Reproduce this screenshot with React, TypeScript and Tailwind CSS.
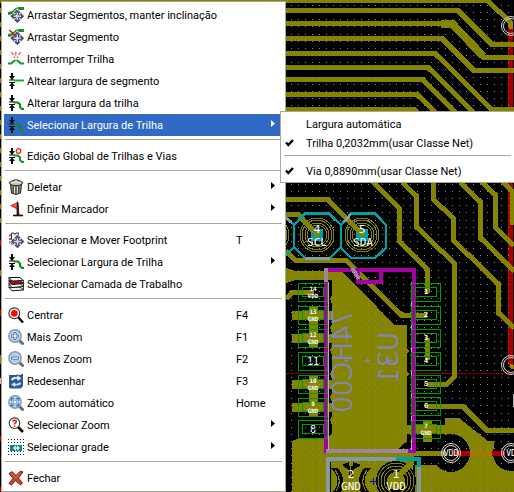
import type { ReactNode } from "react";

/* ---------- menu icons (16 x 16) ---------- */

function Icon({ children }: { children: ReactNode }) {
  return (
    <svg aria-hidden="true" width="16" height="16" viewBox="0 0 16 16" fill="none" className="shrink-0">
      {children}
    </svg>
  );
}

const MoveArrows = ({ x = 10, y = 10 }: { x?: number; y?: number }) => (
  <g transform={`translate(${x} ${y})`}>
    <path
      d="M0-6.4 2.6-3.6H1.2V-1.2H3.6V-2.6L6.4 0 3.6 2.6V1.2H1.2V3.6H2.6L0 6.4-2.6 3.6H-1.2V1.2H-3.6V2.6L-6.4 0-3.6-2.6V-1.2H-1.2V-3.6H-2.6Z"
      fill="#eef0fa"
      stroke="#f4f4fa"
      strokeWidth="2"
    />
    <path
      d="M0-6.4 2.6-3.6H1.2V-1.2H3.6V-2.6L6.4 0 3.6 2.6V1.2H1.2V3.6H2.6L0 6.4-2.6 3.6H-1.2V1.2H-3.6V2.6L-6.4 0-3.6-2.6V-1.2H-1.2V-3.6H-2.6Z"
      fill="#dcdeee"
      stroke="#2e2e58"
      strokeWidth="0.9"
    />
    <path d="M0-5.8 1.8-3.8H-1.8ZM0 5.8 1.8 3.8H-1.8ZM-5.8 0-3.8-1.8V1.8ZM5.8 0 3.8-1.8V1.8Z" fill="#2e2e58" />
  </g>
);

const DragSlope = () => (
  <Icon>
    <path d="M0 6.5 5 5.5 8 2.5 11 1.5H16" stroke="#149226" strokeWidth="3" />
    <MoveArrows x={9.3} y={9.2} />
  </Icon>
);

const DragSegment = () => (
  <Icon>
    <path d="M0 6.5 5 5.5 8 2.5 11 1.5H16" stroke="#149226" strokeWidth="3" />
    <MoveArrows x={9.3} y={9.2} />
    <path d="M1.5 1 8 7.5" stroke="#d01818" strokeWidth="1.6" />
  </Icon>
);

const BreakTrack = () => (
  <Icon>
    <path d="M0 12.5H3L6.5 9.5M16 12.5H13L9.5 9.5" stroke="#189a2c" strokeWidth="2.2" />
    <path d="M6 9.5H10" stroke="#189a2c" strokeWidth="1.2" />
    <path d="M3.500 1 5.500 4M7.800 1V4.500M12.500 1 10.500 4M6 5.500 7 7M10 5.500 9 7" stroke="#d85050" strokeWidth="1.3" />
  </Icon>
);

const WidthArrows = () => (
  <path
    d="M3 0H5V3H7L4.5 6.500H7V7.600H1V6.500H3.500L1 3H3ZM1 9H7V10.100H4.600L7 13H5V16H3V13H1L3.400 10.100H1Z"
    fill="#101010"
  />
);

const SegmentWidth = () => (
  <Icon>
    <WidthArrows />
    <path d="M6 7.5H16" stroke="#10b81c" strokeWidth="2" />
  </Icon>
);

const TrackWidth = () => (
  <Icon>
    <WidthArrows />
    <path d="M5.5 7.5H10L12 9.5V12L14 14H16" stroke="#0c8e1c" strokeWidth="2.2" />
  </Icon>
);

const GlobalEdit = () => (
  <Icon>
    <WidthArrows />
    <path d="M5.5 7.5H10L12 9.5V12L14 14H16" stroke="#0c9a20" strokeWidth="2" />
    <circle cx="10.5" cy="3" r="2.3" stroke="#ec2020" strokeWidth="1.2" />
  </Icon>
);

const Trash = () => (
  <Icon>
    <path d="M2.5 5 3.5 14Q8 17 12.5 14L13.5 5Z" fill="#96968c" stroke="#1c1c18" />
    <path d="M5.2 7V14M8 7.5V15M10.8 7V14" stroke="#34342e" />
    <path d="M6.5 7.5V14.5M9.4 7.5V14.5" stroke="#dcdcd4" />
    <ellipse cx="8" cy="4" rx="6.5" ry="2.6" fill="#c8c8be" stroke="#24241e" />
    <path d="M4 3.6Q8 1.5 12 3.6" stroke="#f6f6f0" />
    <path d="M6 2.6V.8H10V2.6" fill="#e8e8e0" stroke="#3c3c36" />
  </Icon>
);

const Flag = () => (
  <Icon>
    <path d="M9 1 10 1 11 14H9Z" fill="#3a1010" stroke="#201010" strokeWidth="0.8" />
    <path d="M9 1.5V8.5L2 4.5Z" fill="#e81c1c" />
    <path d="M8.5 2.5 4 4.5 8.5 7Z" fill="#f85a50" />
    <path d="M5 14.5H15" stroke="#101010" strokeWidth="1.6" />
  </Icon>
);

const MoveFootprint = () => (
  <Icon>
    <path d="M3.5 1H6L7 2.5 8 1H10.5V12H3.5Z" fill="#ededf2" stroke="#303038" />
    <path d="M2 2.5V13" stroke="#d02020" strokeWidth="1.6" strokeDasharray="2 1.4" />
    <MoveArrows x={9.5} y={9.5} />
  </Icon>
);

const Layers = () => (
  <Icon>
    <path d="M1 11.5 12 11 15.5 14 4 14.8Z" fill="#f2f2f2" stroke="#141414" />
    <path d="M1 8 12 7.5 15.5 10.5 4 11.5Z" fill="#fff" stroke="#141414" />
    <path d="M1 4.8 12 4.5 15.5 7.5 4 8.5Z" fill="#a81414" stroke="#240808" />
    <path d="M1 1.5H12L15.5 4.5 4 5Z" fill="#fafafa" stroke="#141414" />
    <path d="M15.5 4.5V14M1 1.5V11.5" stroke="#303030" />
  </Icon>
);

const Center = () => (
  <Icon>
    <path d="M10 10 15 15.5" stroke="#101010" strokeWidth="2.4" />
    <circle cx="6.3" cy="6.3" r="5.4" fill="#fff" stroke="#303030" strokeWidth="1.1" />
    <circle cx="6.3" cy="6.3" r="3.4" fill="#fa0808" />
  </Icon>
);

const BlueLens = ({ children }: { children: ReactNode }) => (
  <Icon>
    <path d="M11.5 11.5 14.5 14.5" stroke="#6c6c6c" strokeWidth="3" strokeLinecap="round" />
    <circle cx="7" cy="7" r="6" fill="#a9cbf0" stroke="#8d979e" strokeWidth="1.8" />
    <circle cx="7" cy="7" r="4.9" stroke="#dcebf8" strokeWidth="0.8" />
    {children}
  </Icon>
);

const ZoomIn = () => (
  <BlueLens>
    <path d="M6 3.5H8V6H10.5V8H8V10.5H6V8H3.5V6H6Z" fill="#fff" stroke="#3474bc" strokeWidth="0.9" />
  </BlueLens>
);

const ZoomOut = () => (
  <BlueLens>
    <path d="M3.5 6H10.5V8.2H3.5Z" fill="#fff" stroke="#3474bc" strokeWidth="0.9" />
  </BlueLens>
);

const ZoomAuto = () => (
  <BlueLens>
    <path d="M6 3.5H3.5V6M8 3.5H10.5V6M6 10.5H3.5V8M8 10.5H10.5V8" stroke="#3c7cd0" strokeWidth="1.4" />
    <path d="M5.5 5.5H8.5V8.5H5.5Z" fill="#f4f9ff" stroke="#6ba0dc" strokeWidth="0.7" />
  </BlueLens>
);

const Redraw = () => (
  <Icon>
    <path d="M1 2H12L15 0.500V13L13 15.500H3L1 15Z" fill="#2d5c9c" />
    <path d="M2.500 7.500Q3 3 9 3.500V1.500L14 5.200 9 9V6.500Q6 5.500 5 8Z" fill="#d9e8f8" stroke="#173c70" strokeWidth="0.7" />
    <path d="M14 9.500Q13 13.500 7.500 13V15L2.500 11.500 7.500 8.200V10.300Q10 10.500 11.500 9Z" fill="#c3daf2" stroke="#173c70" strokeWidth="0.7" />
  </Icon>
);

const SelectZoom = () => (
  <Icon>
    <path d="M10 10 15 15" stroke="#101010" strokeWidth="2.6" />
    <circle cx="6.5" cy="6.2" r="5.3" fill="#fff" stroke="#303030" strokeWidth="1.1" />
    <path d="M4.8 4.8Q4.8 3.2 6.6 3.2 8.4 3.2 8.3 4.8 8.2 5.8 6.6 6.5V7.4M6.6 8.4V9.8" stroke="#e01010" strokeWidth="1.5" />
  </Icon>
);

const Grid = () => (
  <Icon>
    <g stroke="#202020" strokeDasharray="1 2" shapeRendering="crispEdges">
      <path d="M0 .5H16M0 3.5H16M0 12.5H16M0 15.5H16M0 6.5H2M0 9.5H2M15 6.5H16M15 9.5H16" />
    </g>
    <path d="M2 6H14V12H2Z" fill="#0b8a84" />
    <path d="M5 9 8 6.200V8H9V6.200L12 9 9 11.800V10H8V11.800Z" fill="#fff" />
    <path d="M7 9H10" stroke="#0b8a84" strokeWidth="0.6" />
  </Icon>
);

const Close = () => (
  <Icon>
    <path
      d="M1 3.5 4 1.5 8 5.5 12.5 1 15 2 10.5 8 14.5 13 12.5 15 7.5 10.8 3.5 15 1 13.5 5 8.2Z"
      fill="#c8432a"
      stroke="#6e1a0c"
      strokeWidth="0.9"
    />
    <path d="M3 3.4 7.8 7.8 12.6 2.8" stroke="#e87458" strokeWidth="0.9" />
  </Icon>
);

/* ---------- board drawing ---------- */

const OLIVE = "#848400";
const GREEN = "#009c00";
const TEAL = "#00a0a4";

const TRACKS = [
  "M0 0H487L510 22V27",
  "M285 10.5H458L492 44.5H514",
  "M285 23.5H452L484 57.5H514",
  "M285 38.5H442L474 70.5H514",
  "M285 53.5H435L491 109H514",
  "M285 67.5H428L475 114",
  "M285 79.5H423L457 114",
  "M285 94.5H417L437 114",
  "M285 109H414L419 114",
  "M285 199.5H328L363 235",
  "M373 182 399 208V241L427 269V293",
  "M402 182 416.5 196V227L454 263V377L447 384H427",
  "M433 182V199L453 218V240L498.5 284V313L514 328",
  "M460 182 480.5 202V238L514 271",
  "M480 180 495.5 195V227L514 246",
  "M503 182 512.5 192V225",
  "M286 214H298L317 235",
  "M286 251 295 260H346L402 315.5H427",
  "M427 406.5H463L487 430.5H514",
  "M427 338V360",
  "M286 299 292 292.5H314",
];

function dots() {
  const list: string[] = [];
  for (let y = 0; y < 70; y++)
    for (let x = 0; x < 33; x++) list.push(`M${284 + x * 7} ${Math.round(5 + y * 7.15)}h1v1h-1z`);
  return list.join("");
}

const LEFT_PADS = [
  { n: "14", net: "VDD", y: 292 },
  { n: "13", net: "GND", y: 315 },
  { n: "12", net: "GND", y: 338 },
  { n: "11", net: "", y: 361 },
  { n: "10", net: "GND", y: 384 },
  { n: "9", net: "GND", y: 407 },
  { n: "8", net: "", y: 429 },
];

const RIGHT_PADS = [
  { n: "1", net: "", y: 292 },
  { n: "2", net: "", y: 315 },
  { n: "3", net: "", y: 338 },
  { n: "4", net: "", y: 361 },
  { n: "5", net: "", y: 384 },
  { n: "6", net: "", y: 406 },
  { n: "7", net: "GND", y: 429 },
];

function Pad({ x, y, n, net }: { x: number; y: number; n: string; net: string }) {
  const large = n === "11" || n === "8";
  return (
    <g>
      <path d={`M${x - 14.5} ${y - 9}h29v18h-29zM${x - 10.5} ${y - 4.5}h21v9h-21z`} stroke={GREEN} fill="none" />
      <text
        x={x}
        y={net ? y - 1 : large ? y + 4 : y + 2}
        fontSize={large ? 10 : net ? 6 : 7}
        textAnchor="middle"
        fill="#fff"
        fontWeight={large ? "normal" : "bold"}
      >
        {n}
      </text>
      {net && (
        <text x={x} y={y + 6} fontSize="6" textAnchor="middle" fill="#fff" fontWeight="bold">
          {net}
        </text>
      )}
    </g>
  );
}

function Rings({ x, y, radii, color }: { x: number; y: number; radii: number[]; color: string }) {
  return (
    <g fill="none" stroke={color}>
      {radii.map((r) => (
        <circle key={r} cx={x} cy={y} r={r} />
      ))}
    </g>
  );
}

function Via({ x, y, label }: { x: number; y: number; label?: string }) {
  return (
    <g>
      <circle cx={x} cy={y} r="9.5" fill="none" stroke="#d8d8d8" />
      <circle cx={x} cy={y} r="7.5" fill="none" stroke="#d8d8d8" />
      {label && (
        <text x={x} y={y + 3} fontSize="8" textAnchor="middle" fill="#fff">
          {label}
        </text>
      )}
    </g>
  );
}

function Board() {
  return (
    <svg
      aria-hidden="true"
      viewBox="0 0 514 492"
      preserveAspectRatio="xMinYMin slice"
      className="absolute inset-0 h-full w-full bg-black"
      fontFamily="'DejaVu Sans Mono', monospace"
      shapeRendering="crispEdges"
    >
      {/* left edge, beside the menu */}
      <path d="M0.5 8V224M0.5 355V368" stroke={OLIVE} strokeDasharray="5 9" />
      <path d="M0 310h1v6h-1zM0 436h1v5h-1zM0 487h1v5h-1zM0 240h1v6h-1z" fill="#c00000" />
      <path d="M0 270h1v6h-1zM0 357h1v7h-1z" fill={OLIVE} />
      <path d="M0 378h1v6h-1z" fill="#e8a8b8" />
      <path d="M0 491.5H285" stroke="#a00000" />

      {/* red track on the right */}
      <path d="M510.5 27V365" stroke="#a40000" strokeWidth="5" />
      <path d="M285 373.5H514" stroke="#840000" />

      {/* copper zone */}
      <path
        d="M286 268 296 271H341L361 290 394 325H407V348L409 351 407 354V371L409 374 407 377V440L413 449H514V492H292V441L297 439H326L332 434V425L330 420 332 416V402L330 397 332 393V379L330 374 332 370V355L330 350 332 346V333L330 328 332 324V304L330 299 332 295V280H296L286 283Z"
        fill={OLIVE}
      />
      <path d="M413 443 439 436H454V456H420V465H414Z" fill="#000" />
      <path d="M445 418H459L488 441H494V454H460L445 436Z" fill={OLIVE} />
      <path d="M420 456H460V465H420Z" fill="#000" />
      <path d="M390 456 413 436H440V450H400L395 456Z" fill="#000" />
      <circle cx="451" cy="453" r="19" fill="#000" />
      <circle cx="511" cy="453" r="18" fill="#000" />
      <path d="M327 453.5H445" stroke={OLIVE} strokeWidth="5" />

      {/* thermal reliefs */}
      <g stroke={OLIVE} strokeWidth="9">
        <path d="M292 315.5H334M292 338.5H334M292 384.5H334M292 407.5H334M313 306V347M313 375V416M407 429.5H446M427 420V442" />
      </g>

      <g fill="none" stroke={OLIVE} strokeWidth="5">
        {TRACKS.map((d) => (
          <path key={d} d={d} />
        ))}
        <path d="M441 23.5H452L483 56" strokeWidth="8" />
      </g>

      <path d={dots()} fill="#84849c" />

      {/* connector pads */}
      <Rings x={317} y={235} radii={[17, 15, 12, 10]} color={OLIVE} />
      <Rings x={362} y={235} radii={[17, 15, 12, 10]} color={OLIVE} />
      <Rings x={272} y={235} radii={[17, 15]} color={OLIVE} />
      <path d="M311 229h12v12h-12zM356 229h12v12h-12z" fill={TEAL} />
      <path d="M313 230 319 236M357 229 364 236" stroke={OLIVE} strokeWidth="5" />
      <path
        d="M305 213.5H329L341 225V247L330 258H305L294 247V225ZM351 213.5H375L386 225V248L375 258H351L341 248V225ZM285 216 294 225V247L285 256"
        fill="none"
        stroke={TEAL}
        strokeWidth="2.5"
      />
      <path d="M305 258.5H330M344 222 351 214M286 218 292 223" stroke="#84a0a4" strokeWidth="2.5" />

      {/* chip outline */}
      <path d="M326 269.5H413.5V451H326Z" fill="none" stroke="#a400a4" strokeWidth="4" />
      <path d="M358 271V281.5H381V271" fill="none" stroke="#a400a4" strokeWidth="4" />
      <path d="M326 451H408M326 268V282M352 268 359 279" stroke="#a4849c" strokeWidth="4" fill="none" />
      <path d="M328.5 282V450M411.5 282V450" stroke="#c8a4c8" />

      {LEFT_PADS.map((p) => (
        <Pad key={p.n} x={313} {...p} />
      ))}
      {RIGHT_PADS.map((p) => (
        <Pad key={p.n} x={426} {...p} />
      ))}
      <path d="M309 364 315 358M310 434 317 427" stroke="#0000a4" />

      {/* silkscreen text of the bottom side, mirrored */}
      <g fill="#8484c4" fontFamily="'DejaVu Sans', sans-serif" fontWeight="200" stroke="#8484c4" strokeWidth="0.7">
        <text transform="matrix(0 1 1 0 352 309)" fontSize="26">
          74HC00
        </text>
        <text transform="matrix(0 1 1 0 398 332)" fontSize="26">
          U31
        </text>
      </g>
      <path d="M344 360.5h5M346.5 358v5M364 360.5h6M367.5 358v5M388 360.5h5M390.5 358v5" stroke="#8484c4" />

      {/* power connector */}
      <path d="M330 462V492M414 464V492" stroke="#000" strokeWidth="2" />
      <circle cx="396" cy="481" r="20" fill="#000" />
      <Rings x={396} y={481} radii={[18, 15, 12]} color={OLIVE} />
      <circle cx="396" cy="481" r="9" fill={OLIVE} />
      <path d="M412 462 395 480" stroke={OLIVE} strokeWidth="6" />
      <g fill="#000">
        <path d="M342 465 349 462V466H353V462L361 465 353 470V475L351 477 349 475V470Z" />
        <path d="M331 468Q343 480 333 492H341Q347 481 338 468Z" />
        <path d="M371 468Q359 480 369 492H361Q355 481 364 468Z" />
      </g>
      <path d="M350.5 460V478M335 470Q343 481 336 491M367 470Q359 481 366 491" fill="none" stroke={OLIVE} />
      <path d="M327.5 492V458.5H402" fill="none" stroke="#849ca0" strokeWidth="4" />
      <path d="M396 458.5H418.5V492" fill="none" stroke={TEAL} strokeWidth="4" />
      <path d="M418.5 467V492" stroke="#849ca0" strokeWidth="4" />
      <path d="M370 481.5H377M373.5 478V485" stroke="#0000c4" />

      {/* red link and vias */}
      <path d="M453 453.5H473M491 453.5H505" stroke="#a80000" strokeWidth="5" />
      <path d="M470 453.5H492" stroke="#a47800" strokeWidth="5" />
      <path d="M513.5 394V407" stroke="#b0b0b0" />
      <path d="M510.5 22V29M510 365 514 368" stroke="#a48400" strokeWidth="4" />
      <g shapeRendering="auto">
        <Via x={511} y={26} />
        <Via x={511} y={365} />
        <Via x={451} y={453} label="VDD" />
        <Via x={511} y={453} label="VD" />
      </g>

      <g fill="#fff" textAnchor="middle" fontSize="11">
        <text x="317" y="233">4</text>
        <text x="317" y="246">SCL</text>
        <text x="362" y="233">5</text>
        <text x="363" y="246">SDA</text>
        <text x="351" y="478">2</text>
        <text x="351" y="490">GND</text>
        <text x="396" y="478">1</text>
        <text x="396" y="490">VDD</text>
      </g>
    </svg>
  );
}

/* ---------- menu ---------- */

function Arrow() {
  return (
    <svg aria-hidden="true" width="4" height="7" viewBox="0 0 4 7" className="-mt-1 shrink-0" fill="currentColor">
      <path d="M0 0 4 3.5 0 7Z" />
    </svg>
  );
}

function Check() {
  return (
    <svg aria-hidden="true" width="9" height="8" viewBox="0 0 9 8" className="shrink-0" fill="none">
      <path d="M1 3.5 3.3 6 8 1" stroke="currentColor" strokeWidth="2.4" />
    </svg>
  );
}

type ItemProps = {
  icon: ReactNode;
  label: string;
  shortcut?: string;
  submenu?: boolean;
  active?: boolean;
  children?: ReactNode;
};

function Item({ icon, label, shortcut, submenu, active, children }: ItemProps) {
  return (
    <li role="none" className="relative">
      <button
        type="button"
        role="menuitem"
        aria-haspopup={submenu ? "menu" : undefined}
        aria-expanded={submenu ? !!active : undefined}
        className={
          active
            ? "flex h-[22px] w-full items-center bg-[#316ac5] pr-2 pl-1 text-left text-white"
            : "flex h-[22px] w-full items-center pr-2 pl-1 text-left"
        }
      >
        {icon}
        <span className="ml-[3px] flex-1 pt-0.5 whitespace-nowrap">{label}</span>
        {shortcut && <span className="w-[39px] pt-0.5 whitespace-nowrap">{shortcut}</span>}
        {submenu && <Arrow />}
      </button>
      {children}
    </li>
  );
}

function SubItem({ label, checked }: { label: string; checked: boolean }) {
  return (
    <li role="none">
      <button
        type="button"
        role="menuitemradio"
        aria-checked={checked}
        className="flex h-[19px] w-full items-center pl-0.5 text-left"
      >
        <span className="w-[21px]">{checked && <Check />}</span>
        <span className="pt-0.5 whitespace-nowrap">{label}</span>
      </button>
    </li>
  );
}

const Separator = () => <li role="separator" className="mx-px h-[9px] pt-[3px] before:block before:h-px before:bg-[#aca899]" />;

export default function App() {
  return (
    <main className="relative min-h-screen overflow-hidden bg-black pt-px pl-px font-['Roboto','Liberation_Sans',sans-serif] text-[11px] leading-4 text-black">
      <Board />
      <ul role="menu" className="relative w-[285px] border border-[#aca899] bg-white p-[2px]">
        <Item icon={<DragSlope />} label="Arrastar Segmentos, manter inclinação" />
        <Item icon={<DragSegment />} label="Arrastar Segmento" />
        <Item icon={<BreakTrack />} label="Interromper Trilha" />
        <Item icon={<SegmentWidth />} label="Altear largura de segmento" />
        <Item icon={<TrackWidth />} label="Alterar largura da trilha" />
        <Item icon={<TrackWidth />} label="Selecionar Largura de Trilha" submenu active>
          <ul
            role="menu"
            className="absolute -top-[3px] left-[276px] z-10 w-[235px] border border-[#aca899] bg-white p-[2px]"
          >
            <SubItem label="Largura automática" checked={false} />
            <SubItem label="Trilha 0,2032mm(usar Classe Net)" checked />
            <Separator />
            <SubItem label="Via 0,8890mm(usar Classe Net)" checked />
          </ul>
        </Item>
        <Separator />
        <Item icon={<GlobalEdit />} label="Edição Global de Trilhas e Vias" />
        <Separator />
        <Item icon={<Trash />} label="Deletar" submenu />
        <Item icon={<Flag />} label="Definir Marcador" submenu />
        <Separator />
        <Item icon={<MoveFootprint />} label="Selecionar e Mover Footprint" shortcut="T" />
        <Item icon={<TrackWidth />} label="Selecionar Largura de Trilha" submenu />
        <Item icon={<Layers />} label="Selecionar Camada de Trabalho" />
        <Separator />
        <Item icon={<Center />} label="Centrar" shortcut="F4" />
        <Item icon={<ZoomIn />} label="Mais Zoom" shortcut="F1" />
        <Item icon={<ZoomOut />} label="Menos Zoom" shortcut="F2" />
        <Item icon={<Redraw />} label="Redesenhar" shortcut="F3" />
        <Item icon={<ZoomAuto />} label="Zoom automático" shortcut="Home" />
        <Item icon={<SelectZoom />} label="Selecionar Zoom" submenu />
        <Item icon={<Grid />} label="Selecionar grade" submenu />
        <Separator />
        <Item icon={<Close />} label="Fechar" />
      </ul>
    </main>
  );
}
